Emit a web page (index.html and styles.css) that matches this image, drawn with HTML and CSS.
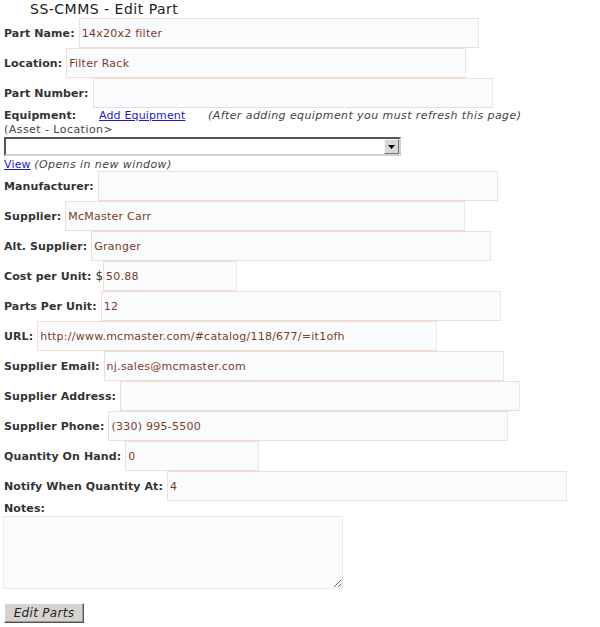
FILE: index.html
```html
<!DOCTYPE html>
<html>
<head>
<meta charset="utf-8">
<title>SS-CMMS - Edit Part</title>
<link rel="stylesheet" href="styles.css">
</head>
<body>
<div class="page">
  <div class="title">SS-CMMS - Edit Part</div>
  <form class="form">
    <div class="row"><span class="lbl">Part Name:</span><input class="field" type="text" value="14x20x2 filter"></div>
    <div class="row"><span class="lbl">Location:</span><input class="field" type="text" value="Filter Rack"></div>
    <div class="row"><span class="lbl">Part Number:</span><input class="field" type="text" value=""></div>
    <div class="equip">
      <span class="lbl equip-lbl">Equipment:</span>
      <a class="link add-link" href="#">Add Equipment</a>
      <span class="note">(After adding equipment you must refresh this page)</span>
    </div>
    <div class="asset">(Asset - Location&gt;</div>
    <div class="selectbox">
      <select class="sel"><option></option></select>
      <span class="arrow"><svg width="7" height="4" viewBox="0 0 7 4"><path d="M0 0H7L3.5 4Z" fill="#000"/></svg></span>
    </div>
    <div class="view"><a class="link" href="#">View</a> <span class="note">(Opens in new window)</span></div>
    <div class="row"><span class="lbl">Manufacturer:</span><input class="field" type="text" value=""></div>
    <div class="row"><span class="lbl">Supplier:</span><input class="field" type="text" value="McMaster Carr"></div>
    <div class="row"><span class="lbl">Alt. Supplier:</span><input class="field" type="text" value="Granger"></div>
    <div class="row"><span class="lbl">Cost per Unit:</span><span class="dollar">$</span><input class="field short" type="text" value="50.88"></div>
    <div class="row"><span class="lbl">Parts Per Unit:</span><input class="field" type="text" value="12"></div>
    <div class="row"><span class="lbl">URL:</span><input class="field" type="text" value="http://www.mcmaster.com/#catalog/118/677/=it1ofh"></div>
    <div class="row"><span class="lbl">Supplier Email:</span><input class="field" type="text" value="nj.sales@mcmaster.com"></div>
    <div class="row"><span class="lbl">Supplier Address:</span><input class="field" type="text" value=""></div>
    <div class="row"><span class="lbl">Supplier Phone:</span><input class="field" type="text" value="(330) 995-5500"></div>
    <div class="row"><span class="lbl">Quantity On Hand:</span><input class="field short" type="text" value="0"></div>
    <div class="row"><span class="lbl">Notify When Quantity At:</span><input class="field" type="text" value="4"></div>
    <div class="notes-lbl"><span class="lbl">Notes:</span></div>
    <textarea class="notes"></textarea>
    <div class="actions"><button class="btn" type="button">Edit Parts</button></div>
  </form>
</div>
</body>
</html>
```

FILE: styles.css
```css
html, body {
  margin: 0;
  padding: 0;
  background: #ffffff;
}
body {
  font-family: "DejaVu Sans", Verdana, sans-serif;
  font-size: 11px;
  color: #333333;
}
.page {
  padding: 0 0 0 3px;
}
.title {
  font-size: 14px;
  letter-spacing: 0.5px;
  line-height: 18px;
  height: 18px;
  padding-left: 27px;
  color: #222222;
}
.form {
  margin: 0;
}
.row {
  display: flex;
  align-items: center;
  height: 30px;
}
.lbl {
  font-weight: bold;
  color: #333333;
  white-space: nowrap;
  margin-left: 1px;
  letter-spacing: 0.1px;
}
.row .lbl {
  margin-right: 4px;
}
.field {
  box-sizing: border-box;
  width: 400px;
  height: 30px;
  margin: 0;
  padding: 0 0 0 2px;
  border: 1px solid #f2ddd5;
  border-right-color: #ece6e6;
  border-bottom-color: #f0dcd5;
  background: #fafbfc;
  font-family: "DejaVu Sans", Verdana, sans-serif;
  font-size: 11px;
  letter-spacing: 0.25px;
  color: #7a3c2c;
  outline: none;
}
.field.short {
  width: 134px;
}
.dollar {
  color: #333333;
  font-size: 12px;
  margin: 0;
}
.equip {
  height: 14px;
  line-height: 16px;
  display: flex;
  white-space: nowrap;
}
.equip-lbl {
  width: 95px;
}
.add-link {
  width: 109px;
}
.link {
  color: #1a1acc;
  text-decoration: underline;
  letter-spacing: 0.15px;
}
.note {
  font-style: italic;
  color: #444444;
  letter-spacing: 0.42px;
}
.asset {
  height: 14px;
  line-height: 16px;
  margin-left: 1px;
  color: #444444;
  letter-spacing: 0.45px;
}
.selectbox {
  box-sizing: border-box;
  display: flex;
  width: 397px;
  height: 19px;
  margin: 1px 0 0 1px;
  border: 2px solid #555555;
  border-right-color: #d0d0d0;
  border-bottom-color: #d0d0d0;
  border-top-color: #555555;
  background: #ffffff;
}
.sel {
  flex: 1;
  appearance: none;
  -webkit-appearance: none;
  border: none;
  background: transparent;
  margin: 0;
  padding: 0;
  font-family: "DejaVu Sans", Verdana, sans-serif;
  font-size: 11px;
  outline: none;
}
.arrow {
  box-sizing: border-box;
  width: 15px;
  height: 15px;
  display: flex;
  align-items: center;
  justify-content: center;
  background: #d8d8d8;
  border: 1px solid #f4f4f4;
  border-right-color: #777777;
  border-bottom-color: #777777;
}
.view {
  height: 15px;
  line-height: 17px;
  margin-left: 1px;
}
.notes-lbl {
  height: 15px;
  line-height: 15px;
  display: flex;
  align-items: flex-end;
}
.notes {
  display: block;
  box-sizing: border-box;
  width: 340px;
  height: 73px;
  margin: 0;
  border: 1px solid #eeeaea;
  border-top-color: #f0e4e0;
  background: #fafbfc;
  font-family: "DejaVu Sans", Verdana, sans-serif;
  font-size: 11px;
  resize: both;
  outline: none;
}
.actions {
  padding-top: 14px;
}
.btn {
  box-sizing: border-box;
  width: 80px;
  height: 20px;
  margin: 0 0 0 1px;
  padding: 0;
  background: #d6d3ce;
  border: 1px solid #ffffff;
  border-right-color: #555555;
  border-bottom-color: #555555;
  box-shadow: inset -1px -1px 0 #999999;
  font-family: "DejaVu Sans", Verdana, sans-serif;
  font-size: 12px;
  letter-spacing: 0.3px;
  font-style: italic;
  color: #222222;
}
```
